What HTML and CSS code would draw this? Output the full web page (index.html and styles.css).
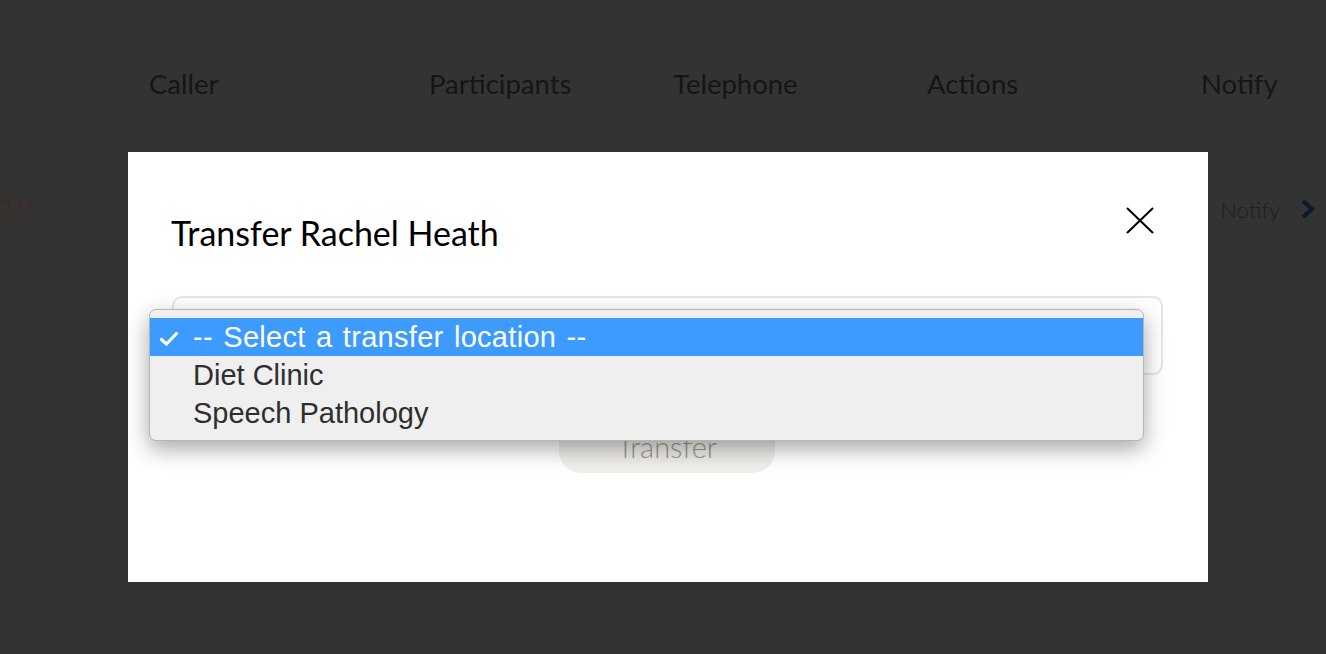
FILE: index.html
```html
<!DOCTYPE html>
<html>
<head>
<meta charset="utf-8">
<link rel="stylesheet" href="styles.css">
</head>
<body>
<div class="page">
  <div class="head-row">
    <div class="col c1">Caller</div>
    <div class="col c2">Participants</div>
    <div class="col c3">Telephone</div>
    <div class="col c4">Actions</div>
    <div class="col c5">Notify</div>
  </div>
  <div class="data-row">
    <span class="frag">21)</span>
    <span class="notify">Notify
      <svg class="chev" width="16" height="20" viewBox="0 0 16 20"><path d="M3 2 L12 10 L3 18" fill="none" stroke="#0d1925" stroke-width="4" stroke-linejoin="miter"/></svg>
    </span>
  </div>
</div>

<div class="modal">
  <div class="modal-head">
    <h2 class="title">Transfer Rachel Heath</h2>
    <button class="close" aria-label="Close">
      <svg width="28" height="27" viewBox="0 0 28 27"><path d="M1 1 L27 26 M27 1 L1 26" stroke="#000" stroke-width="2" fill="none"/></svg>
    </button>
  </div>
  <div class="select-box"></div>
  <div class="btn-row">
    <button class="transfer">Transfer</button>
  </div>
  <div class="popup">
    <div class="opt active"><svg class="check" width="18" height="14" viewBox="0 0 18 14"><path d="M1.5 7.5 L6.5 12 L16.5 1.5" fill="none" stroke="#fff" stroke-width="3.2" stroke-linecap="round" stroke-linejoin="round"/></svg><span class="first">-- Select a transfer location --</span></div>
    <div class="opt">Diet Clinic</div>
    <div class="opt">Speech Pathology</div>
  </div>
</div>
</body>
</html>
```

FILE: styles.css
```css
html, body {
  margin: 0;
  padding: 0;
}
body {
  background: #333333;
  width: 1326px;
  height: 654px;
  overflow: hidden;
  font-family: Lato, "Open Sans", sans-serif;
  position: relative;
}
.page {
  display: flex;
  flex-direction: column;
}
.head-row {
  display: grid;
  grid-template-columns: 280px 244px 254px 274px 1fr;
  padding-left: 149px;
  padding-top: 67px;
  height: 60px;
  font-size: 27.5px;
  color: #151515;
}
.data-row {
  display: flex;
  justify-content: space-between;
  align-items: center;
  padding-top: 66px;
  font-size: 26px;
}
.frag {
  color: #3d2e25;
  font-weight: 400;
  margin-left: -2px;
}
.notify {
  color: #1e1f20;
  font-size: 22px;
  font-weight: 300;
  display: flex;
  align-items: center;
  gap: 20px;
  margin-right: 10px;
}
.modal {
  position: absolute;
  left: 128px;
  top: 152px;
  width: 1080px;
  height: 430px;
  background: #ffffff;
  box-sizing: border-box;
  padding: 0 45px 0 44px;
}
.modal-head {
  display: flex;
  justify-content: space-between;
  align-items: flex-start;
  padding-top: 55px;
}
.title {
  margin: 6px 0 0 -1px;
  font-size: 34px;
  font-weight: 400;
  color: #000;
  line-height: 40px;
}
.close {
  background: none;
  border: 0;
  padding: 0;
  margin-right: 9px;
  width: 28px;
  height: 27px;
  display: block;
}
.select-box {
  margin-top: 43px;
  height: 79px;
  box-sizing: border-box;
  border: 2px solid #e6e5e0;
  border-radius: 10px;
  background: #fff;
}
.btn-row {
  display: flex;
  justify-content: center;
  margin-top: 44px;
  padding-right: 1px;
}
.transfer {
  width: 216px;
  height: 54px;
  border: 0;
  border-radius: 22px;
  background: #efeeea;
  color: #9a9994;
  font-family: Lato, sans-serif;
  font-size: 29px;
  font-weight: 300;
}
.popup {
  position: absolute;
  left: 21px;
  top: 157px;
  width: 995px;
  height: 132px;
  box-sizing: border-box;
  padding-top: 8px;
  background: #efefef;
  border: 1px solid #b5b5b5;
  border-radius: 7px;
  box-shadow: 0 8px 22px rgba(0, 0, 0, 0.35);
  font-family: "Liberation Sans", Arial, sans-serif;
  font-size: 29px;
}
.opt {
  height: 38px;
  line-height: 38px;
  padding-left: 43px;
  color: #2e2e2e;
  position: relative;
}
.opt.active {
  background: #3d9bfd;
  color: #ffffff;
}
.first {
  word-spacing: 2px;
  letter-spacing: 0.3px;
}
.check {
  position: absolute;
  left: 10px;
  top: 14px;
}
```
